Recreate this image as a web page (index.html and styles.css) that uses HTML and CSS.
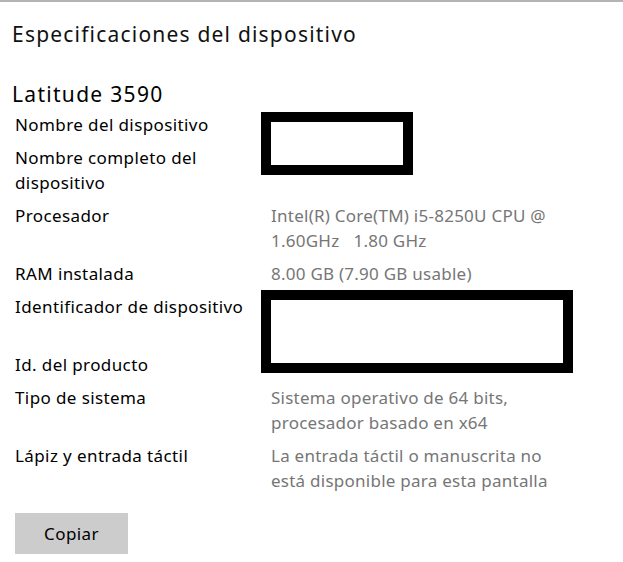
FILE: index.html
```html
<!DOCTYPE html>
<html lang="es">
<head>
<meta charset="utf-8">
<title>Especificaciones del dispositivo</title>
<link rel="stylesheet" href="styles.css">
</head>
<body>
<div class="page">
  <h1 class="title">Especificaciones del dispositivo</h1>
  <h2 class="model">Latitude 3590</h2>
  <div class="specs">
    <div class="label">Nombre del dispositivo</div>
    <div class="value"></div>

    <div class="label">Nombre completo del dispositivo</div>
    <div class="value"></div>

    <div class="label">Procesador</div>
    <div class="value">Intel(R) Core(TM) i5-8250U CPU @ 1.60GHz&nbsp;&nbsp; 1.80 GHz</div>

    <div class="label">RAM instalada</div>
    <div class="value">8.00 GB (7.90 GB usable)</div>

    <div class="label">Identificador de dispositivo</div>
    <div class="value value-tall"></div>

    <div class="label">Id. del producto</div>
    <div class="value"></div>

    <div class="label">Tipo de sistema</div>
    <div class="value">Sistema operativo de 64 bits, procesador basado en x64</div>

    <div class="label">Lápiz y entrada táctil</div>
    <div class="value">La entrada táctil o manuscrita no está disponible para esta pantalla</div>

    <div class="redact redact-name"></div>
    <div class="redact redact-id"></div>
  </div>
  <button class="copy" type="button">Copiar</button>
</div>
</body>
</html>
```

FILE: styles.css
```css
* { box-sizing: border-box; }

html, body {
  margin: 0;
  padding: 0;
  background: #ffffff;
}

body {
  border-top: 2px solid #b4b4b4;
  font-family: "Noto Sans", "Open Sans", "DejaVu Sans", sans-serif;
  color: #000000;
  width: 623px;
  height: 562px;
  overflow: hidden;
}

.page {
  display: flex;
  flex-direction: column;
  align-items: flex-start;
}

.title {
  margin: 17px 0 0 12px;
  font-size: 21px;
  line-height: 30px;
  font-weight: 400;
  letter-spacing: 1.2px;
  color: #111111;
}

.model {
  margin: 32px 0 0 12px;
  font-size: 21px;
  line-height: 26px;
  font-weight: 400;
  letter-spacing: 1.3px;
}

.specs {
  position: relative;
  margin: 5px 0 0 15px;
  display: grid;
  grid-template-columns: 240px 295px;
  column-gap: 16px;
  row-gap: 8px;
  font-size: 17px;
  line-height: 25px;
  letter-spacing: 0.4px;
}

.label {
  color: #000000;
}

.value {
  color: #767676;
  min-height: 25px;
  letter-spacing: 0.25px;
}

.value-tall {
  min-height: 50px;
}

.redact {
  position: absolute;
  border: 10px solid #000000;
  background: #ffffff;
}

.redact-name {
  left: 246px;
  top: 0;
  width: 152px;
  height: 63px;
}

.redact-id {
  left: 246px;
  top: 178px;
  width: 312px;
  height: 83px;
}

.copy {
  margin: 20px 0 0 15px;
  width: 113px;
  height: 41px;
  border: none;
  background: #cccccc;
  color: #000000;
  font-family: "Noto Sans", "Open Sans", "DejaVu Sans", sans-serif;
  font-size: 17px;
  letter-spacing: 0.4px;
  padding: 0;
}
```
